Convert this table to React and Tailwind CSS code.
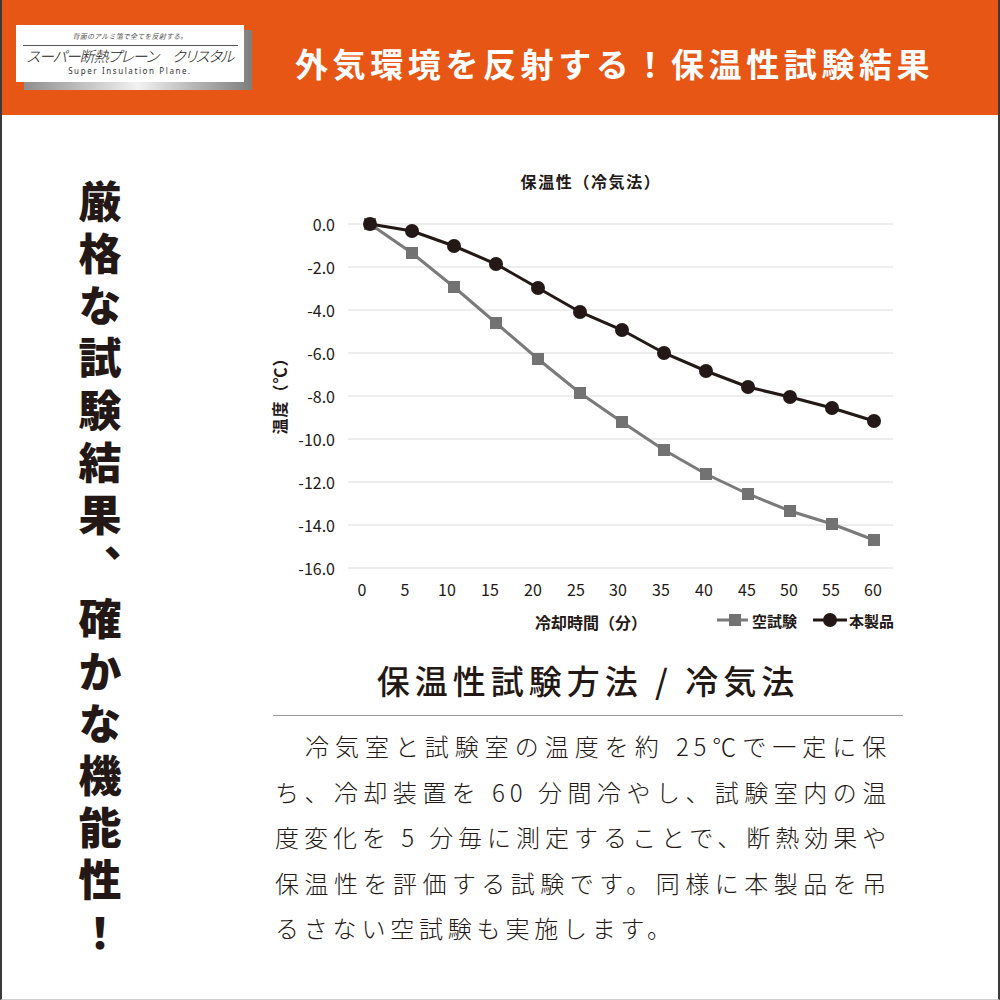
import React from 'react'

// 冷気法のデータ (画面上のピクセル位置をそのまま使う)
const xs = Array.from({ length: 13 }, (_, i) => 110 + i * 42)
const blankYs = [224, 253, 287, 323, 359, 393, 422, 450, 474, 494, 511, 524, 540].map((y) => y - 160)
const productYs = [224, 231, 246, 264, 288, 312, 330, 353, 371, 387, 397, 408, 421].map((y) => y - 160)
const yLabels = ['0.0', '-2.0', '-4.0', '-6.0', '-8.0', '-10.0', '-12.0', '-14.0', '-16.0']
const xLabels = [362, 405, 447, 490, 533, 576, 618, 661, 704, 747, 789, 831, 873]

const ink = '#231815'

const Logo = () => {
  return (
    <div className="relative ml-[14px] mt-[25px] w-[236px] h-[65px]">
      <div className="absolute left-[8px] top-[5px] right-0 bottom-0 bg-gradient-to-r from-[#8f8f8f] via-[#f2f2f2] to-[#7d7d7d]"></div>
      <div className="relative w-[228px] h-[57px] bg-white flex flex-col items-center pt-[7px]">
        <div className="text-[7px] leading-[9px] italic tracking-[0.2px] text-[#555]">背面のアルミ箔で全てを反射する。</div>
        <div className="w-[215px] h-px bg-[#555] mt-[4px]"></div>
        <div className="text-[15px] leading-[17px] mt-[1px] font-light italic text-[#222] tracking-[-1px] [font-feature-settings:'palt']">スーパー断熱プレーン　クリスタル</div>
        <div className="text-[8px] leading-[10px] mt-[2px] tracking-[1.6px] text-[#333] font-['Noto_Sans',sans-serif]">Super Insulation Plane.</div>
      </div>
    </div>
  )
}

const Chart = () => {
  const path = (ys) => ys.map((y, i) => `${i === 0 ? 'M' : 'L'}${xs[i]} ${y}`).join(' ')
  return (
    <svg width="640" height="480" viewBox="0 0 640 480" className="block">
      <text x="331" y="21" textAnchor="middle" dominantBaseline="central" fill={ink} className="text-[16px] font-bold tracking-[1.6px]">保温性（冷気法）</text>

      {yLabels.map((l, k) => (
        <g key={l}>
          <line x1="88" x2="633" y1={64 + k * 43} y2={64 + k * 43} stroke="#dcdcdc" strokeWidth="1" />
          <text x="75" y={64 + k * 43} textAnchor="end" dominantBaseline="central" fill={ink} className="text-[16px]">{l}</text>
        </g>
      ))}

      <text x="19" y="232" textAnchor="middle" dominantBaseline="central" fill={ink} transform="rotate(-90 19 232)" className="text-[16px] font-bold tracking-[1px]">温度（℃）</text>

      {xLabels.map((x, i) => (
        <text key={x} x={x - 260} y="429" textAnchor="middle" dominantBaseline="central" fill={ink} className="text-[16px]">{i * 5}</text>
      ))}

      <path d={path(blankYs)} fill="none" stroke="#7a7a7a" strokeWidth="3" />
      {blankYs.map((y, i) => (
        <rect key={i} x={xs[i] - 6} y={y - 6} width="12" height="12" fill="#727272" />
      ))}
      <path d={path(productYs)} fill="none" stroke={ink} strokeWidth="3" />
      {productYs.map((y, i) => (
        <circle key={i} cx={xs[i]} cy={y} r="7" fill={ink} />
      ))}

      <text x="275" y="462" dominantBaseline="central" fill={ink} className="text-[16px] font-bold">冷却時間（分）</text>

      <line x1="457" x2="488" y1="460" y2="460" stroke="#7a7a7a" strokeWidth="3" />
      <rect x="469" y="454" width="12" height="12" fill="#727272" />
      <text x="492" y="460" dominantBaseline="central" fill={ink} className="text-[15px] font-bold">空試験</text>

      <line x1="553" x2="587" y1="460" y2="460" stroke={ink} strokeWidth="3" />
      <circle cx="570" cy="460" r="7" fill={ink} />
      <text x="589" y="460" dominantBaseline="central" fill={ink} className="text-[15px] font-bold">本製品</text>
    </svg>
  )
}

const App = () => {
  const lines = [
    '　冷気室と試験室の温度を約 25℃で一定に保',
    'ち、冷却装置を 60 分間冷やし、試験室内の温',
    '度変化を 5 分毎に測定することで、断熱効果や',
    '保温性を評価する試験です。同様に本製品を吊',
  ]

  return (
    <div className="w-[1000px] h-[1000px] flex flex-col bg-white border-l-2 border-r-2 border-b border-[#3a3a3a] border-b-[#d0d0d0] font-['Noto_Sans_CJK_JP','Noto_Sans',sans-serif] text-[#231815]">
      <div className="h-[115px] bg-[#e85616] flex flex-row items-start shrink-0">
        <Logo />
        <div className="ml-[43px] mt-[42px] text-[33px] leading-[42px] font-bold text-white tracking-[4.6px] whitespace-nowrap">外気環境を反射する！保温性試験結果</div>
      </div>

      <div className="flex flex-row flex-1">
        <div className="w-[258px] pl-[76px] pt-[65px]">
          <div className="[writing-mode:vertical-rl] text-[43px] leading-none tracking-[9.2px] font-black">厳格な試験結果、確かな機能性！</div>
        </div>

        <div className="w-[643px] flex flex-col pt-[45px]">
          <Chart />
          <div className="ml-[13px] w-[630px]">
            <div className="mt-[20px] h-[40px] leading-[40px] text-center text-[33px] font-medium tracking-[5px] whitespace-nowrap">保温性試験方法 / 冷気法</div>
            <div className="mt-[15px] border-t border-[#9a9a9a]"></div>
            <div className="mt-[7px] pl-[2px] w-[618px] text-[24px] leading-[45.5px] font-light tracking-[4.8px]">
              {lines.map((l, i) => (
                <div key={i} className="whitespace-pre text-justify [text-align-last:justify]">{l}</div>
              ))}
              <div className="whitespace-pre">るさない空試験も実施します。</div>
            </div>
          </div>
        </div>
      </div>
    </div>
  )
}

export default App
